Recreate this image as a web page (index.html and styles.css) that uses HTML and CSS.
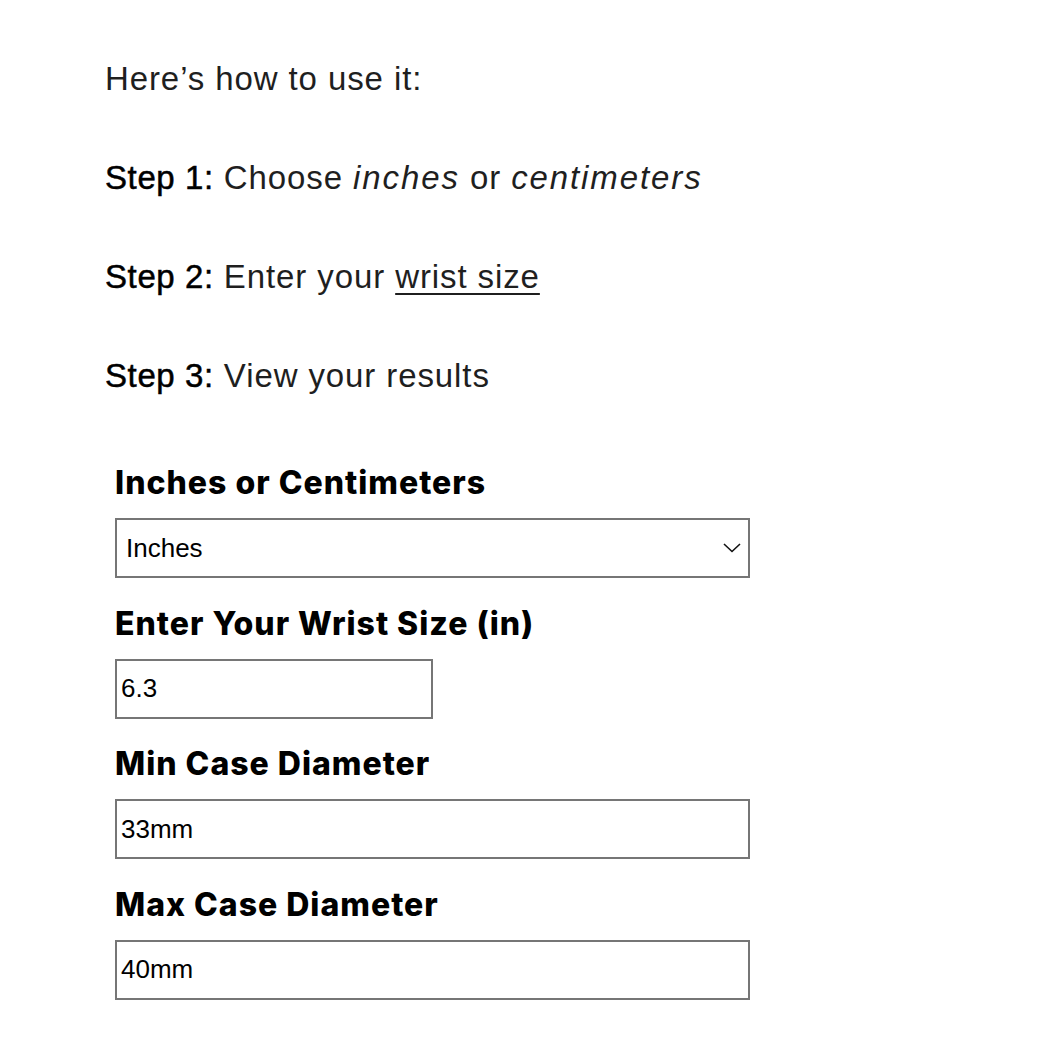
FILE: index.html
```html
<!DOCTYPE html>
<html>
<head>
<meta charset="utf-8">
<link rel="stylesheet" href="styles.css">
</head>
<body>
<main class="page">
  <section class="intro">
    <p class="line">Here’s how to use it:</p>
    <p class="line"><span class="step">Step 1:</span> Choose <em>inches</em> or <em>centimeters</em></p>
    <p class="line"><span class="step">Step 2:</span> Enter your <u>wrist size</u></p>
    <p class="line"><span class="step">Step 3:</span> View your results</p>
  </section>
  <form class="calc">
    <div class="field">
      <label class="label">Inches or Centimeters</label>
      <div class="select">
        <span class="value">Inches</span>
        <svg class="chev" width="18" height="10" viewBox="0 0 18 10"><path d="M1 1 L9 8.5 L17 1" fill="none" stroke="#111" stroke-width="1.6"/></svg>
      </div>
    </div>
    <div class="field">
      <label class="label">Enter Your Wrist Size (in)</label>
      <div class="box short"><span class="value">6.3</span></div>
    </div>
    <div class="field">
      <label class="label">Min Case Diameter</label>
      <div class="box"><span class="value">33mm</span></div>
    </div>
    <div class="field">
      <label class="label">Max Case Diameter</label>
      <div class="box"><span class="value">40mm</span></div>
    </div>
  </form>
</main>
</body>
</html>
```

FILE: styles.css
```css
html, body {
  margin: 0;
  padding: 0;
  background: #fff;
}
.page {
  padding: 0 0 0 105px;
  font-family: "Liberation Sans", Arial, sans-serif;
  color: #111;
}
.intro {
  padding-top: 60px;
}
.line {
  margin: 0 0 62px 0;
  font-size: 33px;
  line-height: 37px;
  letter-spacing: 0.9px;
  color: #1f1f1f;
}
.step {
  color: #000;
  letter-spacing: 0.6px;
  -webkit-text-stroke: 0.5px #000;
}
.line em { font-style: italic; letter-spacing: 1.9px; }
.line u { text-underline-offset: 5px; text-decoration-thickness: 2px; }
.calc {
  padding-left: 10px;
  padding-top: 7px;
  display: flex;
  flex-direction: column;
}
.field {
  display: flex;
  flex-direction: column;
  margin-bottom: 25.6px;
}
.label {
  font-family: Inter, "Noto Sans", sans-serif;
  font-weight: 800;
  font-size: 32px;
  line-height: 40px;
  color: #000;
  margin-bottom: 15px;
  letter-spacing: 1px;
}
.select, .box {
  box-sizing: border-box;
  width: 635px;
  height: 60px;
  border: 2px solid #767676;
  display: flex;
  align-items: center;
  font-family: "Liberation Sans", Arial, sans-serif;
  font-size: 26px;
  color: #000;
}
.select {
  justify-content: space-between;
  padding: 0 7px 0 9px;
}
.box { padding-left: 4px; }
.box.short { width: 318px; }
```
